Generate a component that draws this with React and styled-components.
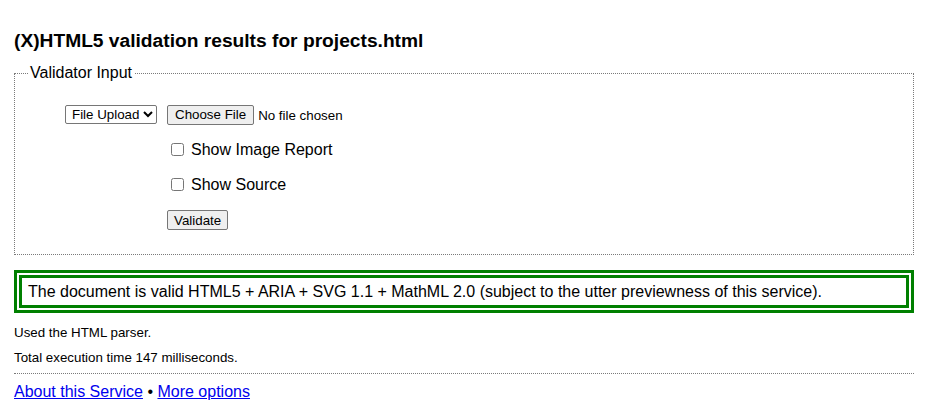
import React from 'react';
import styled, { createGlobalStyle } from 'styled-components';

const GlobalStyle = createGlobalStyle`
  html, body {
    margin: 0;
    padding: 0;
    background: #fff;
  }
  body {
    font-family: 'Liberation Sans', Arial, sans-serif;
    color: #000;
  }
`;

const Page = styled.div`
  padding: 30px 12px 0 14px;
`;

const Title = styled.h1`
  margin: 0 0 12px;
  font-size: 19.2px;
  line-height: 22px;
  font-weight: 700;
`;

const InputSet = styled.fieldset`
  margin: 0;
  padding: 15px 12px 16px 13px;
  border: 1px dotted #7a7a7a;
  min-width: 0;
`;

const Legend = styled.legend`
  padding: 0 2px;
  font-size: 16px;
  line-height: 18px;
`;

const FormGrid = styled.div`
  display: grid;
  grid-template-columns: 129px 1fr;
  grid-template-rows: 35px 35px 35px 36px;
  column-gap: 10px;
  align-items: center;
`;

const LeftCell = styled.div`
  display: flex;
  justify-content: flex-end;
`;

const RightCell = styled.div`
  grid-column: ${p => (p.$full ? '2' : 'auto')};
  display: flex;
  align-items: center;
`;

const Select = styled.select`
  font-family: 'Liberation Sans', Arial, sans-serif;
  font-size: 13.33px;
  height: 19px;
  width: 92px;
  padding: 0 0 0 2px;
  border: 1px solid #767676;
  border-radius: 2px;
  background: #fff;
  color: #000;
`;

const FileInput = styled.input`
  font-family: 'Liberation Sans', Arial, sans-serif;
  font-size: 13.33px;
  color: #000;
  &::file-selector-button {
    font-family: 'Liberation Sans', Arial, sans-serif;
    font-size: 13.33px;
    height: 20px;
    padding: 1px 7px;
    margin-right: 4px;
    background: #efefef;
    border: 1px solid #767676;
    border-radius: 2px;
    color: #000;
  }
`;

const CheckLabel = styled.label`
  display: flex;
  align-items: center;
  font-size: 16px;
  line-height: 18px;
`;

const Check = styled.input`
  width: 13px;
  height: 13px;
  margin: 3px 7px 3px 4px;
`;

const Button = styled.button`
  font-family: 'Liberation Sans', Arial, sans-serif;
  font-size: 13.33px;
  height: 20px;
  padding: 1px 6px;
  background: #efefef;
  border: 1px solid #767676;
  border-radius: 2px;
  color: #000;
`;

const Success = styled.div`
  margin-top: 15px;
  border: 8px double #008000;
  padding: 5px 6px 4px;
  font-size: 16px;
  line-height: 18px;
`;

const Note = styled.p`
  margin: ${p => (p.$first ? '12px' : '10px')} 0 0;
  font-size: 13.33px;
  line-height: 15px;
`;

const Rule = styled.hr`
  margin: 8px 0 9px;
  border: 0;
  border-top: 1px dotted #7a7a7a;
  height: 0;
`;

const Footer = styled.p`
  margin: 0;
  font-size: 16px;
  line-height: 18px;
  a {
    color: #0000ee;
    text-decoration: underline;
  }
`;

export default function App() {
  return (
    <>
      <GlobalStyle />
      <Page>
        <Title>(X)HTML5 validation results for projects.html</Title>
        <InputSet>
          <Legend>Validator Input</Legend>
          <FormGrid>
            <LeftCell>
              <Select defaultValue="file">
                <option value="file">File Upload</option>
                <option value="url">Address</option>
                <option value="text">Text Field</option>
              </Select>
            </LeftCell>
            <RightCell>
              <FileInput type="file" />
            </RightCell>
            <RightCell $full>
              <CheckLabel>
                <Check type="checkbox" />
                Show Image Report
              </CheckLabel>
            </RightCell>
            <RightCell $full>
              <CheckLabel>
                <Check type="checkbox" />
                Show Source
              </CheckLabel>
            </RightCell>
            <RightCell $full>
              <Button type="button">Validate</Button>
            </RightCell>
          </FormGrid>
        </InputSet>
        <Success>
          The document is valid HTML5 + ARIA + SVG 1.1 + MathML 2.0 (subject to the utter previewness of this service).
        </Success>
        <Note $first>Used the HTML parser.</Note>
        <Note>Total execution time 147 milliseconds.</Note>
        <Rule />
        <Footer>
          <a href="#about">About this Service</a> • <a href="#options">More options</a>
        </Footer>
      </Page>
    </>
  );
}
